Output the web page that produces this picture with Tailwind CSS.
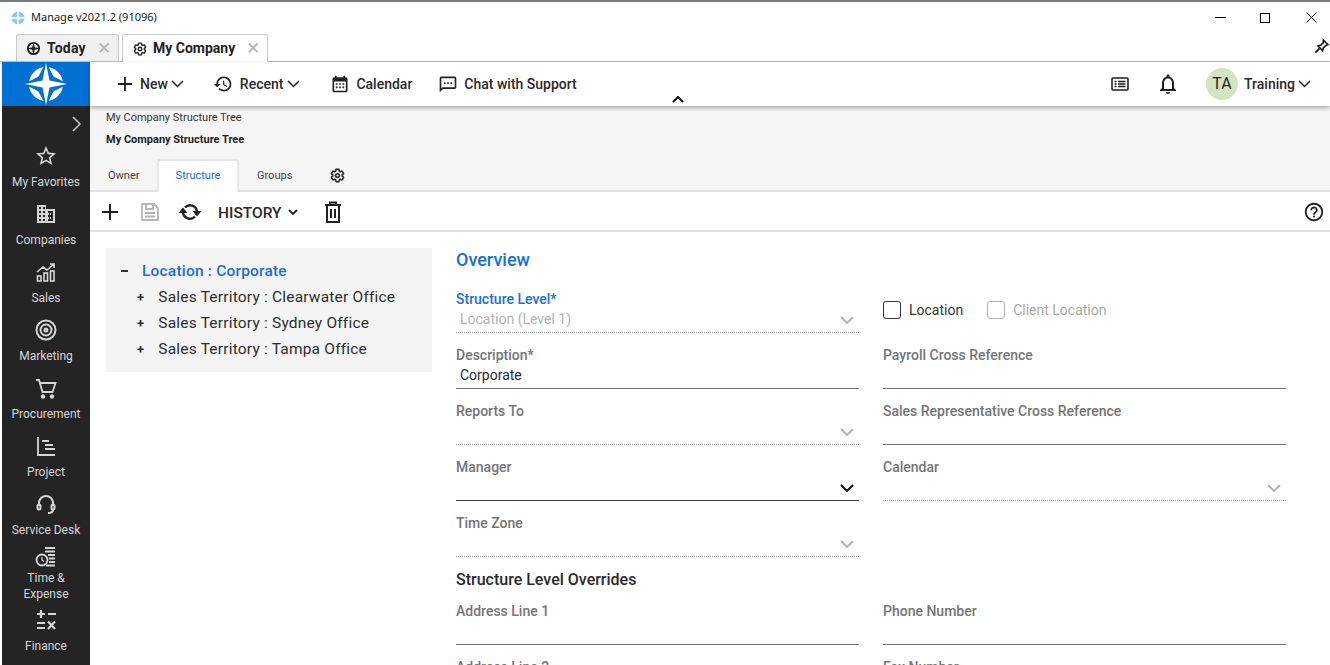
<!DOCTYPE html>
<html lang="en">
<head>
<meta charset="UTF-8" />
<title>Manage</title>
<script src="https://cdn.jsdelivr.net/npm/@tailwindcss/browser@4"></script>
</head>
<body class="h-[665px] overflow-hidden bg-white font-['Roboto',sans-serif] text-[#212121]">
<!-- Window title bar -->
<div class="flex h-[33px] items-center border-t-2 border-[#7a7a7a] bg-white">
  <svg class="ml-[11px] h-[14px] w-[14px]" viewBox="0 0 14 14"><circle cx="7" cy="7" r="6.5" fill="#8cc8f0"/><path d="M7 0v14M0 7h14" stroke="#fff" stroke-width="1.5"/><circle cx="7" cy="7" r="2" fill="#fff"/></svg>
  <span class="ml-[6px] font-['Noto_Sans',sans-serif] text-[11px] text-[#1a1a1a]">Manage v2021.2 (91096)</span>
  <div class="ml-auto flex items-center">
    <span class="mr-[34px] h-px w-[11px] bg-black"></span>
    <span class="mr-[36px] h-[10px] w-[10px] border border-black"></span>
    <svg class="mr-[13px] h-[11px] w-[11px]" viewBox="0 0 11 11" fill="none" stroke="#000"><path d="M.5.5l10 10M10.5.5l-10 10"/></svg>
  </div>
</div>
<!-- Tab strip -->
<div class="flex h-[29px] items-end border-b border-[#bdbdbd] pl-[16px]">
  <div class="flex h-[27px] w-[103px] items-center rounded-t-[3px] border border-b-0 border-[#c8c8c8] bg-[#f0f0f0] pl-[9px]">
    <svg class="h-[15px] w-[15px]" viewBox="0 0 24 24"><circle cx="12" cy="12" r="9" fill="none" stroke="#212121" stroke-width="3"/><path d="M12 2l2 8 8 2-8 2-2 8-2-8-8-2 8-2z" fill="#212121"/></svg>
    <span class="ml-[6px] text-[14px] font-bold tracking-[.2px]">Today</span>
    <span class="ml-[11px] text-[17px] leading-none text-[#b0b0b0]">✕</span>
  </div>
  <div class="relative top-px ml-[3px] flex h-[28px] w-[146px] items-center rounded-t-[3px] border border-b-0 border-[#c8c8c8] bg-white pl-[10px]">
    <svg class="h-[14px] w-[14px]" viewBox="0 0 24 24" fill="none" stroke="#212121" stroke-width="2.4"><path d="M19.43 12.98c.04-.32.07-.64.07-.98s-.03-.66-.07-.98l2.11-1.65c.19-.15.24-.42.12-.64l-2-3.46c-.12-.22-.39-.3-.61-.22l-2.49 1c-.52-.4-1.08-.73-1.69-.98l-.38-2.65C14.46 2.18 14.25 2 14 2h-4c-.25 0-.46.18-.49.42l-.38 2.65c-.61.25-1.17.59-1.69.98l-2.49-1c-.23-.09-.49 0-.61.22l-2 3.46c-.13.22-.07.49.12.64l2.11 1.65c-.04.32-.07.65-.07.98s.03.66.07.98l-2.11 1.65c-.19.15-.24.42-.12.64l2 3.46c.12.22.39.3.61.22l2.49-1c.52.4 1.08.73 1.69.98l.38 2.65c.03.24.24.42.49.42h4c.25 0 .46-.18.49-.42l.38-2.65c.61-.25 1.17-.59 1.69-.98l2.49 1c.23.09.49 0 .61-.22l2-3.46c.12-.22.07-.49-.12-.64l-2.11-1.65z"/><circle cx="12" cy="12" r="3"/></svg>
    <span class="ml-[6px] text-[14px] font-bold">My Company</span>
    <span class="ml-[11px] text-[17px] leading-none text-[#b0b0b0]">✕</span>
  </div>
  <svg class="mb-[7px] ml-auto h-[16px] w-[16px]" viewBox="0 0 24 24" fill="none" stroke="#111" stroke-width="2.4"><path d="M14 3l7 7-3 1-4 4-1 4-7-7 4-1 4-4zM8 16l-6 6"/></svg>
</div>

<div class="flex h-[603px]">
  <!-- Sidebar -->
  <div class="ml-[2px] flex w-[88px] flex-col bg-[#242424] text-[#d6d6d6]">
    <div class="flex h-[44px] items-center justify-center bg-[#0070d2]">
      <svg class="h-[44px] w-[44px]" viewBox="0 0 44 44">
        <circle cx="22" cy="22" r="13.5" fill="none" stroke="#fff" stroke-width="7"/>
        <path d="M22 0l7.5 14.5L44 22l-14.5 7.5L22 44l-7.5-14.5L0 22l14.5-7.5z" fill="#0070d2"/>
        <path d="M22 1l3.5 17.5L43 22l-17.5 3.5L22 43l-3.5-17.5L1 22l17.5-3.5z" fill="#fff"/>
      </svg>
    </div>
    <div class="flex h-[29px] items-center justify-end pr-[8px] pt-[6px]">
      <svg class="h-[16px] w-[12px]" viewBox="0 0 12 16" fill="none" stroke="#c8c8c8" stroke-width="1.5"><path d="M3 1l7 7-7 7"/></svg>
    </div>
    <div class="flex h-[58px] flex-col items-center pt-[9px]">
      <svg class="h-[24px] w-[24px]" viewBox="0 0 24 24" fill="currentColor"><path d="M22 9.24l-7.19-.62L12 2 9.19 8.63 2 9.24l5.46 4.73L5.82 21 12 17.27 18.18 21l-1.63-7.03L22 9.24zM12 15.4l-3.76 2.27 1-4.28-3.32-2.88 4.38-.38L12 6.1l1.71 4.04 4.38.38-3.32 2.88 1 4.28L12 15.4z"/></svg>
      <span class="mt-[6px] text-[12px] leading-4">My Favorites</span>
    </div>
    <div class="flex h-[58px] flex-col items-center pt-[9px]">
      <svg class="h-[24px] w-[24px]" viewBox="0 0 24 24" fill="currentColor"><path d="M12 7V3H3v18h18V7h-9zM7 19H5v-2h2v2zm0-4H5v-2h2v2zm0-4H5V9h2v2zm0-4H5V5h2v2zm4 12H9v-2h2v2zm0-4H9v-2h2v2zm0-4H9V9h2v2zm0-4H9V5h2v2zm8 12h-5v-2h1v-2h-1v-2h1v-2h-1V9h5v10zm-2-8h-1v2h1v-2zm0 4h-1v2h1v-2z"/></svg>
      <span class="mt-[6px] text-[12px] leading-4">Companies</span>
    </div>
    <div class="flex h-[58px] flex-col items-center pt-[9px]">
      <svg class="h-[24px] w-[24px]" viewBox="0 0 24 24" fill="none" stroke="currentColor" stroke-width="1.6"><path d="M3 12l6-5 4 3 7-6M16 4h4v4"/><rect x="3.5" y="16" width="3.5" height="5"/><rect x="10" y="13" width="3.5" height="8"/><rect x="16.5" y="11" width="3.5" height="10"/></svg>
      <span class="mt-[6px] text-[12px] leading-4">Sales</span>
    </div>
    <div class="flex h-[58px] flex-col items-center pt-[9px]">
      <svg class="h-[24px] w-[24px]" viewBox="0 0 24 24" fill="none" stroke="currentColor" stroke-width="2"><circle cx="12" cy="12" r="9.5"/><circle cx="12" cy="12" r="5.5"/><circle cx="12" cy="12" r="1.5"/></svg>
      <span class="mt-[6px] text-[12px] leading-4">Marketing</span>
    </div>
    <div class="flex h-[58px] flex-col items-center pt-[9px]">
      <svg class="h-[24px] w-[24px]" viewBox="0 0 24 24" fill="none" stroke="currentColor" stroke-width="1.8"><path d="M2 4h3l3.5 12h10l3-9H6"/><circle cx="9" cy="20.5" r="1.3" fill="currentColor"/><circle cx="18" cy="20.5" r="1.3" fill="currentColor"/></svg>
      <span class="mt-[6px] text-[12px] leading-4">Procurement</span>
    </div>
    <div class="flex h-[58px] flex-col items-center pt-[9px]">
      <svg class="h-[24px] w-[24px]" viewBox="0 0 24 24" fill="none" stroke="currentColor" stroke-width="1.8"><path d="M4 3v18h17M8 7h7M11 11h8M11 15h4M15 15h6"/></svg>
      <span class="mt-[6px] text-[12px] leading-4">Project</span>
    </div>
    <div class="flex h-[58px] flex-col items-center pt-[9px]">
      <svg class="h-[24px] w-[24px]" viewBox="0 0 24 24" fill="none" stroke="currentColor" stroke-width="2"><path d="M5 14v-3a7 7 0 0114 0v3"/><rect x="3.5" y="12.5" width="3" height="5" rx="1.5"/><rect x="17.5" y="12.5" width="3" height="5" rx="1.5"/><path d="M19 17.5c0 2.5-2 3.5-5 3.5"/></svg>
      <span class="mt-[6px] text-[12px] leading-4">Service Desk</span>
    </div>
    <div class="flex h-[61px] flex-col items-center pt-[4px]">
      <svg class="h-[24px] w-[24px]" viewBox="0 0 24 24" fill="none" stroke="currentColor" stroke-width="1.8"><path d="M11 3h10M11 6.5h10M14 10h7M15 13.5h6M15 17h6M12 20.5h9"/><circle cx="8" cy="15" r="5.5"/><path d="M8 12v3l2 1.5" stroke-width="1.2"/></svg>
      <span class="mt-[1px] w-[60px] text-center text-[12px] leading-4">Time &amp; Expense</span>
    </div>
    <div class="flex h-[58px] flex-col items-center pt-[6px]">
      <svg class="h-[24px] w-[24px]" viewBox="0 0 24 24" fill="none" stroke="currentColor" stroke-width="2.2"><path d="M7 2v8M3 6h8M14 6h8M3 15h8M3 20h8M14 13.5l7 7.5M21 13.5l-7 7.5"/></svg>
      <span class="mt-[6px] text-[12px] leading-4">Finance</span>
    </div>
  </div>

  <!-- Main column -->
  <div class="flex min-w-0 flex-1 flex-col">
    <!-- Top nav -->
    <div class="relative z-10 flex h-[44px] items-center bg-white pl-[26px] text-[14px] font-medium text-[#2a2a2a] shadow-[0_2px_4px_rgba(0,0,0,0.3)]">
      <svg class="h-[18px] w-[18px]" viewBox="0 0 18 18" stroke="#212121" stroke-width="1.8"><path d="M9 2v14M2 9h14"/></svg>
      <span class="ml-[6px]">New</span>
      <svg class="ml-[3px] h-[8px] w-[13px]" viewBox="0 0 13 8" fill="none" stroke="#212121" stroke-width="1.5"><path d="M1 1l5.5 5.5L12 1"/></svg>
      <svg class="ml-[29px] h-[20px] w-[20px]" viewBox="0 0 24 24" fill="#212121"><path d="M13 3c-4.97 0-9 4.03-9 9H1l3.89 3.89.07.14L9 12H6c0-3.87 3.13-7 7-7s7 3.13 7 7-3.13 7-7 7c-1.93 0-3.68-.79-4.94-2.06l-1.42 1.42C8.27 19.99 10.51 21 13 21c4.97 0 9-4.03 9-9s-4.03-9-9-9zm-1 5v5l4.28 2.54.72-1.21-3.5-2.08V8H12z"/></svg>
      <span class="ml-[7px]">Recent</span>
      <svg class="ml-[4px] h-[8px] w-[13px]" viewBox="0 0 13 8" fill="none" stroke="#212121" stroke-width="1.5"><path d="M1 1l5.5 5.5L12 1"/></svg>
      <svg class="ml-[30px] h-[20px] w-[20px]" viewBox="0 0 24 24" fill="#212121"><path d="M19 4h-1V2h-2v2H8V2H6v2H5a2 2 0 00-2 2v14a2 2 0 002 2h14a2 2 0 002-2V6a2 2 0 00-2-2zm0 16H5V9h14v11zM7 11h2v2H7zm4 0h2v2h-2zm4 0h2v2h-2zm-8 4h2v2H7zm4 0h2v2h-2zm4 0h2v2h-2z"/></svg>
      <span class="ml-[6px]">Calendar</span>
      <svg class="ml-[26px] h-[20px] w-[20px]" viewBox="0 0 24 24" fill="#212121"><path d="M20 3H4c-1.1 0-2 .9-2 2v17l4-4h14c1.1 0 2-.9 2-2V5c0-1.1-.9-2-2-2zm0 13H5.5L4 17.5V5h16v11zM7 10h2v2H7zm4 0h2v2h-2zm4 0h2v2h-2z"/></svg>
      <span class="ml-[6px]">Chat with Support</span>
      <svg class="absolute left-[582px] top-[34px] h-[7px] w-[12px]" viewBox="0 0 12 7" fill="none" stroke="#111" stroke-width="2"><path d="M1 6l5-5 5 5"/></svg>
      <div class="ml-auto flex items-center pr-[19px]">
        <svg class="h-[20px] w-[20px]" viewBox="0 0 20 20" fill="none" stroke="#212121" stroke-width="1.6"><rect x="2" y="4" width="16" height="12" rx="1"/><path d="M4.5 7.5h2M8 7.5h7.5M4.5 10h2M8 10h7.5M4.5 12.5h2M8 12.5h7.5"/></svg>
        <svg class="ml-[26px] h-[24px] w-[24px]" viewBox="0 0 24 24" fill="#212121"><path d="M12 22c1.1 0 2-.9 2-2h-4c0 1.1.9 2 2 2zm6-6v-5c0-3.07-1.63-5.64-4.5-6.32V4c0-.83-.67-1.5-1.5-1.5s-1.5.67-1.5 1.5v.68C7.64 5.36 6 7.92 6 11v5l-2 2v1h16v-1l-2-2zm-2 1H8v-6c0-2.48 1.51-4.5 4-4.5s4 2.02 4 4.5v6z"/></svg>
        <span class="ml-[26px] flex h-[32px] w-[32px] items-center justify-center rounded-full bg-[#d5e3c0] text-[16px] font-normal text-[#1f1f1f]">TA</span>
        <span class="ml-[6px]">Training</span>
        <svg class="ml-[3px] h-[8px] w-[13px]" viewBox="0 0 13 8" fill="none" stroke="#212121" stroke-width="1.5"><path d="M1 1l5.5 5.5L12 1"/></svg>
      </div>
    </div>

    <!-- Page header with tabs -->
    <div class="flex h-[86px] flex-col border-b-2 border-[#e2e2e2] bg-[#f5f5f5] pl-[16px]">
      <div class="mt-[5px] text-[11px] leading-[13px] text-[#333]">My Company Structure Tree</div>
      <div class="mt-[9px] text-[11px] font-bold leading-[13px] text-[#222]">My Company Structure Tree</div>
      <div class="mt-[13px] flex h-[33px] items-stretch text-[11px] text-[#444]">
        <span class="flex w-[51px] items-center pl-[2px] pt-[2px]">Owner</span>
        <span class="relative z-10 flex h-[33px] w-[82px] items-center justify-center rounded-t-[2px] border-x-2 border-t-2 border-[#e6e6e6] bg-white text-[#1a6fd6]">Structure</span>
        <span class="ml-[18px] flex items-center pt-[2px]">Groups</span>
        <svg class="ml-[38px] mt-[9px] h-[15px] w-[15px]" viewBox="0 0 24 24" fill="none" stroke="#212121" stroke-width="2.4"><path d="M19.43 12.98c.04-.32.07-.64.07-.98s-.03-.66-.07-.98l2.11-1.65c.19-.15.24-.42.12-.64l-2-3.46c-.12-.22-.39-.3-.61-.22l-2.49 1c-.52-.4-1.08-.73-1.69-.98l-.38-2.65C14.46 2.18 14.25 2 14 2h-4c-.25 0-.46.18-.49.42l-.38 2.65c-.61.25-1.17.59-1.69.98l-2.49-1c-.23-.09-.49 0-.61.22l-2 3.46c-.13.22-.07.49.12.64l2.11 1.65c-.04.32-.07.65-.07.98s.03.66.07.98l-2.11 1.65c-.19.15-.24.42-.12.64l2 3.46c.12.22.39.3.61.22l2.49-1c.52.4 1.08.73 1.69.98l.38 2.65c.03.24.24.42.49.42h4c.25 0 .46-.18.49-.42l.38-2.65c.61-.25 1.17-.59 1.69-.98l2.49 1c.23.09.49 0 .61-.22l2-3.46c.12-.22.07-.49-.12-.64l-2.11-1.65z"/><circle cx="12" cy="12" r="3"/></svg>
      </div>
    </div>

    <!-- Toolbar -->
    <div class="flex h-[40px] items-center border-b-2 border-[#e2e2e2] bg-white pl-[11px] pr-[5px] pt-[2px]">
      <svg class="h-[18px] w-[18px]" viewBox="0 0 18 18" stroke="#212121" stroke-width="2"><path d="M9 1v16M1 9h16"/></svg>
      <svg class="ml-[21px] h-[20px] w-[20px]" viewBox="0 0 20 20" fill="none" stroke="#b5b5b5" stroke-width="1.8"><path d="M2 2h12l4 4v12H2zM6 2v5h7V2M5 11h10M5 14.5h10"/></svg>
      <svg class="ml-[18px] h-[24px] w-[24px]" viewBox="0 0 24 24" fill="none" stroke="#212121" stroke-width="2.4"><path d="M7 7.5A7 7 0 0119 11.5M17 16.5A7 7 0 015 12.5"/><path d="M14.5 11h9L19 16.5zM.5 13h9L5 7.500z" fill="#212121" stroke="none"/></svg>
      <span class="ml-[16px] mt-[3px] text-[15.5px] font-medium text-[#2a2a2a]">HISTORY</span>
      <svg class="ml-[6px] h-[6px] w-[10px]" viewBox="0 0 10 6" fill="none" stroke="#212121" stroke-width="1.8"><path d="M1 1l4 4 4-4"/></svg>
      <svg class="ml-[25px] h-[22px] w-[20px]" viewBox="0 0 20 22" fill="none" stroke="#212121" stroke-width="2"><path d="M2 4h16M7 4V1.5h6V4M4 4v17h12V4M8 8v9M12 8v9"/></svg>
      <svg class="ml-auto h-[22px] w-[22px]" viewBox="0 0 24 24" fill="#212121"><path d="M11 18h2v-2h-2v2zm1-16C6.48 2 2 6.48 2 12s4.48 10 10 10 10-4.48 10-10S17.52 2 12 2zm0 18c-4.41 0-8-3.59-8-8s3.59-8 8-8 8 3.59 8 8-3.59 8-8 8zm0-14c-2.21 0-4 1.79-4 4h2c0-1.1.9-2 2-2s2 .9 2 2c0 2-3 1.75-3 5h2c0-2.25 3-2.5 3-5 0-2.21-1.79-4-4-4z"/></svg>
    </div>

    <!-- Content -->
    <div class="flex min-h-0 flex-1 overflow-hidden">
      <!-- Tree -->
      <div class="ml-[16px] mt-[16px] h-[124px] w-[326px] bg-[#f4f4f4] pt-[10px] text-[15.5px] leading-[26px] tracking-[.2px] text-[#2e2e2e]">
        <div class="flex items-center pl-[15px] font-medium text-[#1a6fd6]"><span class="h-[2px] w-[7px] bg-[#333]"></span><span class="ml-[14px]">Location : Corporate</span></div>
        <div class="flex items-center pl-[31px]"><span class="text-[13px] font-bold leading-none">+</span><span class="ml-[14px]">Sales Territory : Clearwater Office</span></div>
        <div class="flex items-center pl-[31px]"><span class="text-[13px] font-bold leading-none">+</span><span class="ml-[14px]">Sales Territory : Sydney Office</span></div>
        <div class="flex items-center pl-[31px]"><span class="text-[13px] font-bold leading-none">+</span><span class="ml-[14px]">Sales Territory : Tampa Office</span></div>
      </div>

      <!-- Form -->
      <div class="ml-[24px] w-[830px]">
        <div class="mt-[16px] text-[18px] font-medium leading-[24px] text-[#1a6fd6]">Overview</div>
        <div class="mt-[17px] grid grid-cols-[403px_403px] gap-x-[24px] gap-y-[12px] text-[14px] leading-5">
          <div class="relative h-[44px] border-b border-dotted border-[#9e9e9e]">
            <div class="font-medium text-[#1a6fd6]">Structure Level*</div>
            <div class="pl-[4px] text-[#b3b3b3]">Location (Level 1)</div>
            <svg class="absolute bottom-[8px] right-[5px] h-[8px] w-[14px]" viewBox="0 0 14 8" fill="none" stroke="#b3b3b3" stroke-width="2"><path d="M1 1l6 6 6-6"/></svg>
          </div>
          <div class="flex h-[44px] items-center pb-[2px]">
            <span class="h-[18px] w-[18px] rounded-[3px] border-[1.5px] border-[#333]"></span>
            <span class="ml-[8px] text-[#333]">Location</span>
            <span class="ml-[24px] h-[18px] w-[18px] rounded-[3px] border-[1.5px] border-[#b5b5b5]"></span>
            <span class="ml-[8px] text-[#aaa]">Client Location</span>
          </div>
          <div class="h-[44px] border-b border-[#757575]">
            <div class="font-medium text-[#757575]">Description*</div>
            <div class="pl-[4px] text-[#2a2a2a]">Corporate</div>
          </div>
          <div class="h-[44px] border-b border-[#757575] font-medium text-[#757575]">Payroll Cross Reference</div>
          <div class="relative h-[44px] border-b border-dotted border-[#9e9e9e] font-medium text-[#757575]">Reports To
            <svg class="absolute bottom-[8px] right-[5px] h-[8px] w-[14px]" viewBox="0 0 14 8" fill="none" stroke="#b3b3b3" stroke-width="2"><path d="M1 1l6 6 6-6"/></svg>
          </div>
          <div class="h-[44px] border-b border-[#757575] font-medium text-[#757575]">Sales Representative Cross Reference</div>
          <div class="relative h-[44px] border-b border-[#424242] font-medium text-[#757575]">Manager
            <svg class="absolute bottom-[8px] right-[5px] h-[8px] w-[14px]" viewBox="0 0 14 8" fill="none" stroke="#111" stroke-width="2"><path d="M1 1l6 6 6-6"/></svg>
          </div>
          <div class="relative h-[44px] border-b border-dotted border-[#9e9e9e] font-medium text-[#757575]">Calendar
            <svg class="absolute bottom-[8px] right-[5px] h-[8px] w-[14px]" viewBox="0 0 14 8" fill="none" stroke="#b3b3b3" stroke-width="2"><path d="M1 1l6 6 6-6"/></svg>
          </div>
          <div class="relative h-[44px] border-b border-dotted border-[#9e9e9e] font-medium text-[#757575]">Time Zone
            <svg class="absolute bottom-[8px] right-[5px] h-[8px] w-[14px]" viewBox="0 0 14 8" fill="none" stroke="#b3b3b3" stroke-width="2"><path d="M1 1l6 6 6-6"/></svg>
          </div>
          <div></div>
          <div class="col-span-2 h-[20px] pt-px text-[16px] font-medium leading-[20px] text-[#2a2a2a]">Structure Level Overrides</div>
          <div class="h-[44px] border-b border-[#757575] font-medium text-[#757575]">Address Line 1</div>
          <div class="h-[44px] border-b border-[#757575] font-medium text-[#757575]">Phone Number</div>
          <div class="h-[44px] font-medium text-[#757575]">Address Line 2</div>
          <div class="h-[44px] font-medium text-[#757575]">Fax Number</div>
        </div>
      </div>
    </div>
  </div>
</div>
</body>
</html>
